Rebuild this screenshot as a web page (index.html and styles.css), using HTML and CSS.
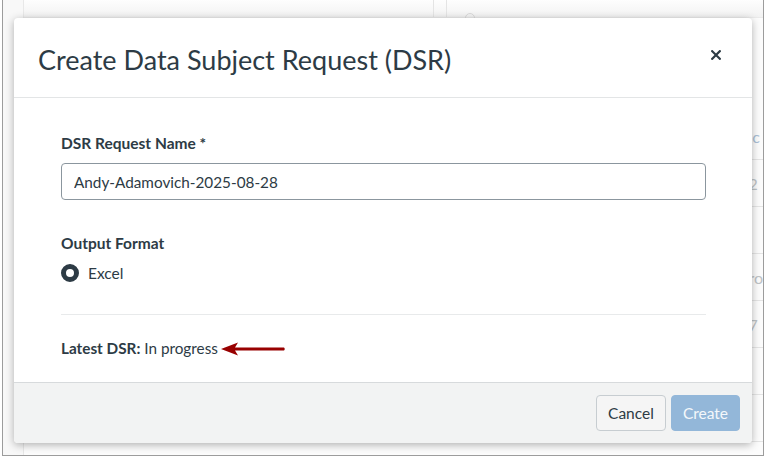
FILE: index.html
```html
<!DOCTYPE html>
<html lang="en">
<head>
  <meta charset="UTF-8">
  <title>Create Data Subject Request</title>
  <link rel="stylesheet" href="styles.css">
</head>
<body>
  <div class="frame">
    <!-- page behind the modal -->
    <div class="page">
      <div class="gutter"></div>
      <div class="main">
        <div class="toolbar">
          <div class="tool-a"></div>
          <div class="tool-b"><span class="search-ring"></span></div>
        </div>
        <div class="rows">
          <div class="row"><span class="cell link">.c</span></div>
          <div class="row"><span class="cell">2</span></div>
          <div class="row"><span class="cell"></span></div>
          <div class="row"><span class="cell">ro</span></div>
          <div class="row"><span class="cell">7</span></div>
          <div class="row"><span class="cell"></span></div>
          <div class="row"><span class="cell"></span></div>
        </div>
      </div>
    </div>
    <div class="overlay"></div>

    <div class="modal" role="dialog">
      <header class="modal-header">
        <h1>Create Data Subject Request (DSR)</h1>
        <button class="close" aria-label="Close">
          <svg width="10" height="10" viewBox="0 0 10 10"><path d="M1.2 1.2 L8.8 8.8 M8.8 1.2 L1.2 8.8" stroke="#2d3b45" stroke-width="2.2" stroke-linecap="square"/></svg>
        </button>
      </header>

      <div class="modal-body">
        <label class="field-label" for="dsrName">DSR Request Name *</label>
        <input class="text-input" id="dsrName" type="text" value="Andy-Adamovich-2025-08-28">

        <div class="field-label format-label">Output Format</div>
        <label class="radio">
          <span class="radio-dot"></span>
          <span>Excel</span>
        </label>

        <hr class="divider">

        <p class="latest">
          <strong>Latest DSR:</strong> In progress<svg class="arrow" width="66" height="14" viewBox="0 0 66 14"><path d="M0 7 L17 0.5 L14 5.5 L63 5.5 Q64.5 7 63 8.5 L14 8.5 L17 13.5 Z" fill="#980000"/></svg>
        </p>
      </div>

      <footer class="modal-footer">
        <button class="btn btn-cancel">Cancel</button>
        <button class="btn btn-create">Create</button>
      </footer>
    </div>
  </div>
</body>
</html>
```

FILE: styles.css
```css
* {
  margin: 0;
  padding: 0;
  box-sizing: border-box;
}

html, body {
  width: 766px;
  height: 458px;
  overflow: hidden;
  background: #fff;
  font-family: "Lato", "Open Sans", sans-serif;
  color: #2d3b45;
}

.frame {
  position: relative;
  margin: 0 2px;
  width: 762px;
  height: 456px;
  border: 1px solid #9c9c9c;
  border-top: none;
  overflow: hidden;
}

/* page behind */
.page {
  display: flex;
  height: 100%;
  background: #fafafa;
}

.gutter {
  width: 22px;
  border-right: 1px solid #dcdcdc;
  background: #f4f4f4;
}

.main {
  flex: 1;
  display: flex;
  flex-direction: column;
}

.toolbar {
  display: flex;
  height: 18px;
  background: linear-gradient(#fdfdfd, #ececec);
  border-bottom: 1px solid #e0e0e0;
}

.tool-a {
  width: 410px;
  border-right: 1px solid #d6d6d6;
}

.tool-b {
  flex: 1;
  margin-left: 12px;
  border-left: 1px solid #d6d6d6;
  position: relative;
}

.search-ring {
  position: absolute;
  left: 18px;
  top: 13px;
  width: 10px;
  height: 10px;
  border: 1px solid #c4c4c4;
  border-radius: 50%;
}

.rows {
  padding-top: 95px;
  padding-left: 724px;
}

.row {
  height: 47px;
  border-bottom: 1px solid #d8d8d8;
  display: flex;
  align-items: center;
  font-size: 16px;
  color: #9aa3a8;
}

.row .link {
  color: #7d9fc0;
}

.overlay {
  position: absolute;
  inset: 0;
  background: rgba(255, 255, 255, 0.35);
}

/* modal */
.modal {
  position: absolute;
  left: 11px;
  top: 18px;
  width: 738px;
  height: 425px;
  background: #fff;
  border-radius: 4px;
  box-shadow: 0 2px 8px rgba(0, 0, 0, 0.3);
  display: flex;
  flex-direction: column;
  overflow: hidden;
}

.modal-header {
  height: 80px;
  display: flex;
  align-items: center;
  justify-content: space-between;
  padding: 0 31px 0 24px;
  border-bottom: 1px solid #e3e5e6;
  flex-shrink: 0;
}

.modal-header h1 {
  font-size: 27px;
  font-weight: 400;
  margin-top: 4px;
}

.close {
  border: none;
  background: none;
  width: 10px;
  height: 10px;
  margin-top: -5px;
  display: flex;
}

.modal-body {
  flex: 1;
  padding: 35px 46px 0 47px;
}

.field-label {
  display: block;
  font-size: 15.5px;
  font-weight: 700;
  line-height: 20px;
}

.text-input {
  display: block;
  margin-top: 10px;
  width: 645px;
  height: 37px;
  border: 1px solid #8b969e;
  border-radius: 4px;
  padding: 0 12px;
  font-family: inherit;
  font-size: 15.3px;
  color: #2d3b45;
  outline: none;
}

.format-label {
  margin-top: 33px;
}

.radio {
  display: flex;
  align-items: center;
  gap: 9px;
  margin-top: 11px;
  font-size: 15.5px;
}

.radio-dot {
  width: 18px;
  height: 18px;
  border-radius: 50%;
  border: 5px solid #2d3b45;
  background: #fff;
}

.divider {
  border: none;
  border-top: 1px solid #e8eaeb;
  margin-top: 32px;
  width: 645px;
}

.latest {
  margin-top: 23px;
  font-size: 15.3px;
  line-height: 20px;
}

.latest strong {
  font-weight: 700;
}

.arrow {
  margin-left: 3px;
  vertical-align: -2px;
}

.modal-footer {
  height: 61px;
  flex-shrink: 0;
  background: #f2f3f3;
  border-top: 1px solid #d7dadc;
  display: flex;
  justify-content: flex-end;
  align-items: center;
  gap: 5px;
  padding: 0 12px 0 0;
}

.btn {
  height: 36px;
  padding: 0 11px;
  border-radius: 4px;
  font-family: inherit;
  font-size: 15.5px;
}

.btn-cancel {
  background: #f5f5f5;
  border: 1px solid #c7cdd1;
  color: #2d3b45;
}

.btn-create {
  background: #93b7d9;
  border: 1px solid #93b7d9;
  color: #f4f8fb;
}
```
